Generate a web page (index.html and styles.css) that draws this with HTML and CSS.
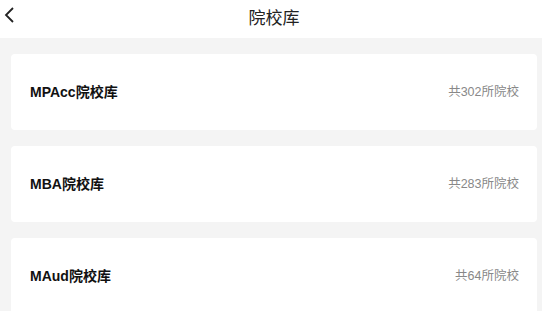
FILE: index.html
```html
<!DOCTYPE html>
<html lang="zh-CN">
<head>
  <meta charset="UTF-8">
  <meta name="viewport" content="width=device-width, initial-scale=1.0">
  <title>院校库</title>
  <link rel="stylesheet" href="styles.css">
</head>
<body>
  <div class="header">
    <a href="#" class="back">
      <svg width="12" height="18" viewBox="0 0 12 18"><path d="M10 2 L3 9 L10 16" fill="none" stroke="#222" stroke-width="1.8"/></svg>
    </a>
    <h1>院校库</h1>
  </div>

  <div class="list">
    <div class="card">
      <span class="name">MPAcc院校库</span>
      <span class="count">共302所院校</span>
    </div>
    <div class="card">
      <span class="name">MBA院校库</span>
      <span class="count">共283所院校</span>
    </div>
    <div class="card">
      <span class="name">MAud院校库</span>
      <span class="count">共64所院校</span>
    </div>
  </div>
</body>
</html>
```

FILE: styles.css
```css
* {
  margin: 0;
  padding: 0;
  box-sizing: border-box;
}

body {
  font-family: 'Liberation Sans', 'Noto Sans CJK SC', sans-serif;
  background: #f4f4f4;
  color: #222;
}

.header {
  position: relative;
  height: 38px;
  background: #fff;
  display: flex;
  align-items: center;
  justify-content: center;
}

.back {
  position: absolute;
  left: 3px;
  top: 6px;
  display: flex;
}

h1 {
  font-size: 17px;
  font-weight: normal;
  color: #222;
  margin-left: 6px;
  margin-top: -6px;
}

.list {
  padding: 16px 5px 0 11px;
  display: flex;
  flex-direction: column;
  gap: 16px;
}

.card {
  background: #fff;
  height: 76px;
  border-radius: 4px;
  display: flex;
  align-items: center;
  justify-content: space-between;
  padding: 0 18px 3px 19px;
}

.name {
  font-size: 14px;
  font-weight: bold;
  color: #111;
}

.count {
  font-size: 12.5px;
  color: #888;
}
```
